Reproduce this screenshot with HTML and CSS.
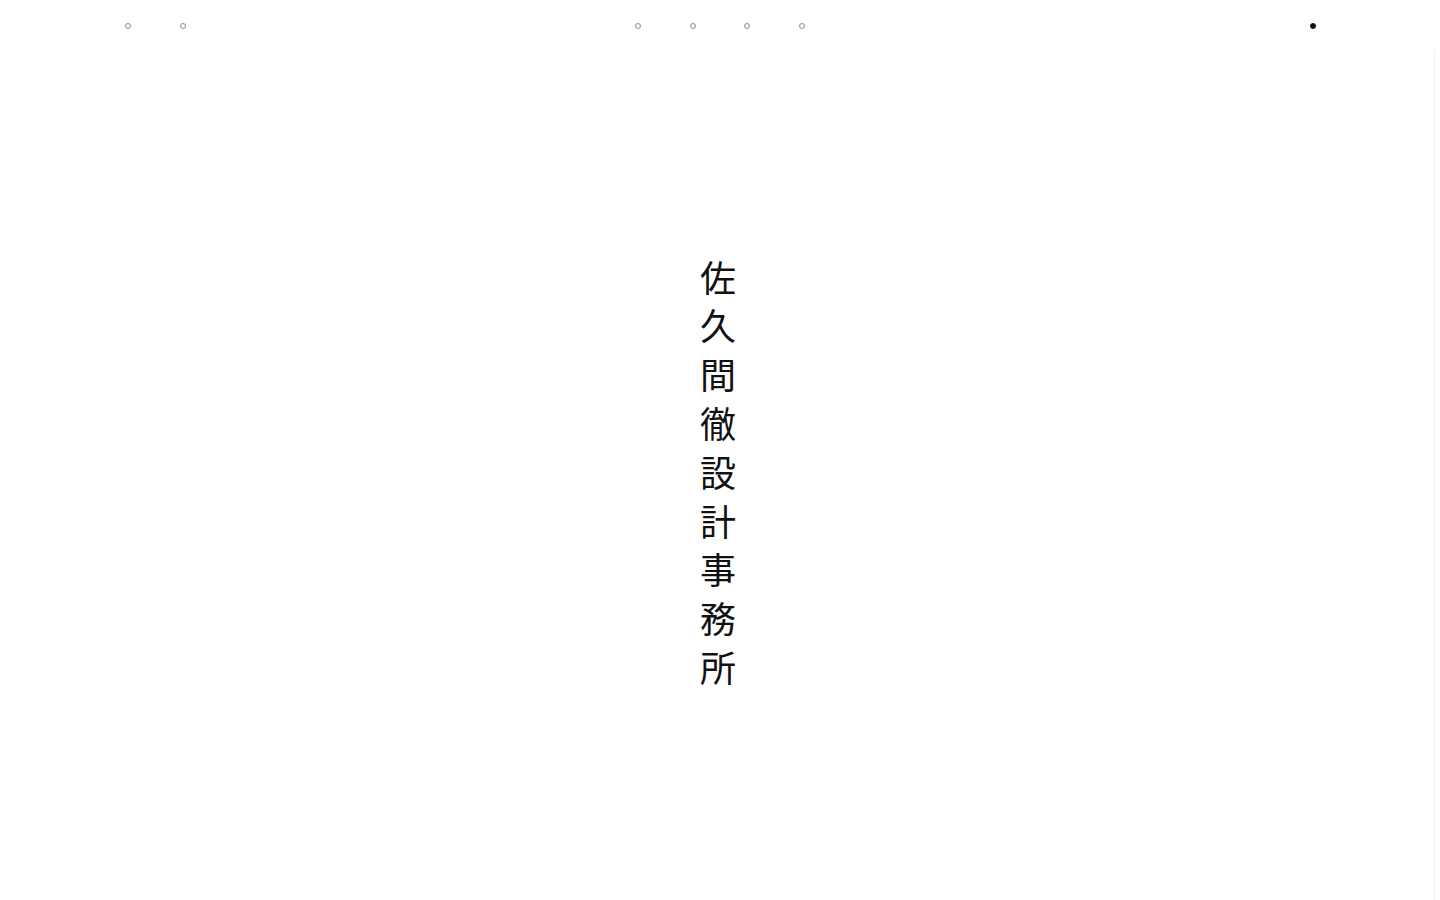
FILE: index.html
```html
<!DOCTYPE html>
<html lang="ja">
<head>
<meta charset="utf-8">
<title>佐久間徹設計事務所</title>
<link rel="stylesheet" href="styles.css">
</head>
<body>
<header class="nav">
  <div class="group group-left">
    <span class="dot"></span>
    <span class="dot"></span>
  </div>
  <div class="group group-center">
    <span class="dot"></span>
    <span class="dot"></span>
    <span class="dot"></span>
    <span class="dot"></span>
  </div>
  <div class="group group-right">
    <span class="dot dot-filled"></span>
  </div>
</header>
<main class="hero">
  <h1 class="title">佐久間徹設計事務所</h1>
</main>
<div class="edge-line"></div>
</body>
</html>
```

FILE: styles.css
```css
html, body {
  margin: 0;
  padding: 0;
  background: #ffffff;
}
body {
  width: 1440px;
  height: 900px;
  overflow: hidden;
  font-family: "Noto Sans CJK JP", "Noto Sans CJK SC", sans-serif;
  color: #111;
}
.nav {
  display: flex;
  align-items: center;
  height: 52px;
  padding: 0 0 0 125px;
}
.group {
  display: flex;
  gap: 48.5px;
  align-items: center;
}
.group-left {
  width: 510px;
}
.group-center {
  width: 675px;
}
.dot {
  box-sizing: border-box;
  width: 6px;
  height: 6px;
  border: 1px solid #8a8a8a;
  border-radius: 50%;
}
.dot-filled {
  background: #111;
  border-color: #111;
}
.hero {
  display: flex;
  justify-content: center;
  padding-top: 208px;
}
.title {
  margin: 0;
  writing-mode: vertical-rl;
  font-size: 36px;
  font-weight: 400;
  line-height: 1;
  letter-spacing: 12.8px;
  color: #111;
  margin-left: -4px;
}
.edge-line {
  position: absolute;
  left: 1434px;
  top: 50px;
  width: 1px;
  height: 850px;
  background: #f2f2f2;
}
```
